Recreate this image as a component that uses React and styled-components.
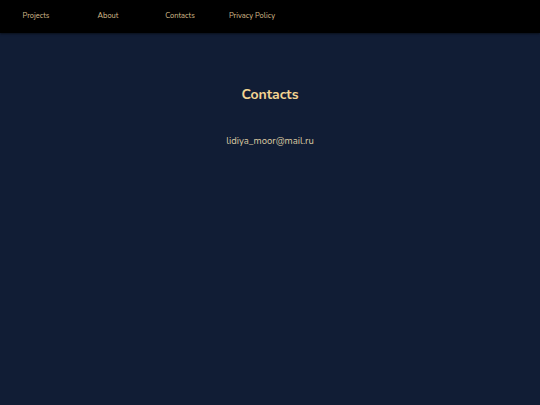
import React from "react";
import styled, { createGlobalStyle } from "styled-components";

const Global = createGlobalStyle`
  * {
    margin: 0;
    padding: 0;
    box-sizing: border-box;
  }
  html, body, #root {
    height: 100%;
  }
  body {
    background-color: #111d35;
    font-family: "Nunito", Lato, "Open Sans", sans-serif;
  }
`;

const Page = styled.div`
  min-height: 100%;
  display: flex;
  flex-direction: column;
`;

const Nav = styled.nav`
  height: 33px;
  background-color: #000;
  display: flex;
  align-items: center;
  padding-bottom: 2px;
  box-shadow: 0 1px 2px rgba(0, 0, 0, 0.5);
`;

const NavItem = styled.a`
  width: 72px;
  text-align: center;
  font-size: 7.5px;
  color: #d6bd8c;
  text-decoration: none;
  cursor: pointer;
`;

const Main = styled.main`
  display: flex;
  flex-direction: column;
  align-items: center;
  padding-top: 52px;
`;

const Title = styled.h1`
  font-size: 14px;
  font-weight: 700;
  color: #f3d492;
`;

const Email = styled.p`
  margin-top: 30px;
  font-size: 9.5px;
  color: #dccaa2;
`;

const App = () => {
  const links = ["Projects", "About", "Contacts", "Privacy Policy"];
  return (
    <Page>
      <Global />
      <Nav>
        {links.map((l) => (
          <NavItem key={l}>{l}</NavItem>
        ))}
      </Nav>
      <Main>
        <Title>Contacts</Title>
        <Email>lidiya_moor@mail.ru</Email>
      </Main>
    </Page>
  );
};

export default App;
